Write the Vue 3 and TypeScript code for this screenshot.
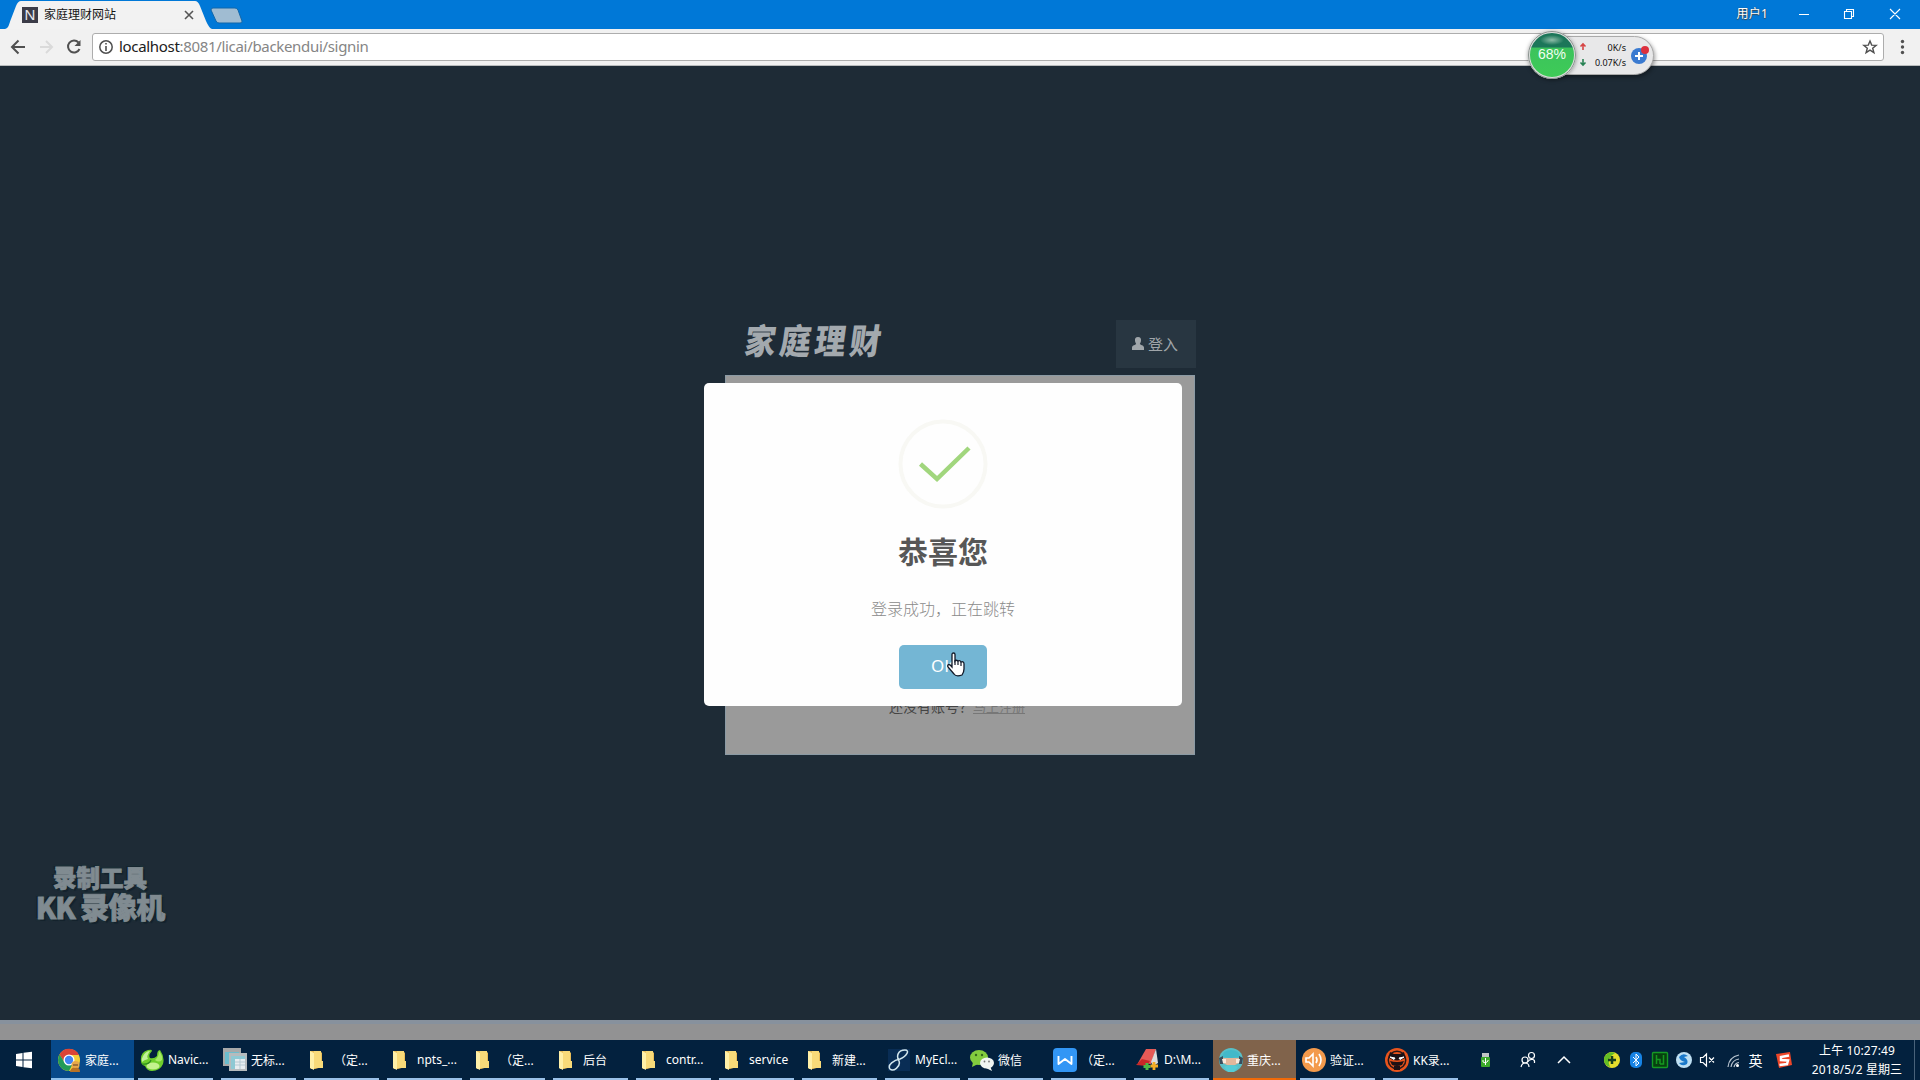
<script setup lang="ts">
interface Task { icon: string; label: string; state?: string }
const tasks: Task[] = [
  { icon: 'chrome', label: '家庭...', state: 'active' },
  { icon: 'navicat', label: 'Navic...' },
  { icon: 'notepad', label: '无标...' },
  { icon: 'folder', label: '（定...' },
  { icon: 'folder', label: 'npts_...' },
  { icon: 'folder', label: '（定...' },
  { icon: 'folder', label: '后台' },
  { icon: 'folder', label: 'contr...' },
  { icon: 'folder', label: 'service' },
  { icon: 'folder', label: '新建...' },
  { icon: 'eclipse', label: 'MyEcl...' },
  { icon: 'wechat', label: '微信' },
  { icon: 'wps', label: '（定...' },
  { icon: 'editor', label: 'D:\\M...' },
  { icon: 'avatar', label: '重庆...', state: 'alert' },
  { icon: 'sound', label: '验证...' },
  { icon: 'kk', label: 'KK录...' },
]
</script>

<template>
  <div class="screen">
    <header class="titlebar">
      <div class="tab">
        <svg class="tab-shape" width="212" height="29" viewBox="0 0 212 29">
          <path d="M5 29C9 28 9 24 11 19L16 6Q18 1 21 1H195Q198 1 200 6L206 21Q209 28 212 29Z" fill="#f2f2f2" />
        </svg>
        <span class="favicon">N</span>
        <span class="tab-title">家庭理财网站</span>
        <svg class="tab-close" width="10" height="10" viewBox="0 0 10 10"><path d="M1 1L9 9M9 1L1 9" stroke="#555" stroke-width="1.6" /></svg>
      </div>
      <svg class="newtab" width="34" height="18" viewBox="0 0 34 18">
        <path d="M3 1H25Q27 1 28 3L32 14Q32.500 16 30 16H9Q7 16 6 14L1 3Q1 1 3 1Z" fill="#a0bcd2" stroke="#1167aa" />
      </svg>
      <span class="spacer"></span>
      <span class="user">用户1</span>
      <svg class="winctl" width="120" height="28" viewBox="0 0 120 28" fill="none" stroke="#fff" stroke-width="1.1">
        <path d="M10 13.500H20M55.500 10.500H62.500V17.500H55.500ZM57.500 10.500V8.500H64.500V15.500H62.500M101 8L111 18M111 8L101 18" />
      </svg>
    </header>

    <nav class="toolbar">
      <svg class="nav" width="92" height="36" viewBox="0 0 92 36" fill="none" stroke-width="2">
        <path d="M25 18H12M18.500 11.500L12 18L18.500 24.500" stroke="#505050" />
        <path d="M40 18H52M46 12L52 18L46 24" stroke="#dadada" />
        <path d="M78.500 13.500A6 6 0 1 0 79.500 20" stroke="#505050" />
        <path d="M80.500 11V17H74.500Z" fill="#505050" />
      </svg>
      <div class="address">
        <svg width="16" height="16" viewBox="0 0 16 16"><circle cx="8" cy="8" r="6.200" fill="none" stroke="#4f4f4f" stroke-width="1.500" /><path d="M8 7V12M8 4V5.600" stroke="#4f4f4f" stroke-width="1.600" /></svg>
        <span class="url"><b>localhost</b>:8081/licai/backendui/signin</span>
        <svg class="star" width="16" height="16" viewBox="0 0 16 16"><path d="M8 2L9.700 6.100L14.200 6.400L10.700 9.300L11.900 13.700L8 11.200L4.100 13.700L5.300 9.300L1.800 6.400L6.300 6.100Z" fill="none" stroke="#505050" stroke-width="1.400" /></svg>
      </div>
      <svg class="menu" width="36" height="36" viewBox="0 0 36 36" fill="#505050"><circle cx="18.500" cy="12.500" r="1.700" /><circle cx="18.500" cy="18" r="1.700" /><circle cx="18.500" cy="23.500" r="1.700" /></svg>
    </nav>

    <main class="page">
      <section class="login">
        <div class="login-head">
          <h1 class="brand">家庭理财</h1>
          <div class="login-tab">
            <svg width="12" height="13" viewBox="0 0 12 13"><path d="M6 0C8.400 0 9.300 1.600 9 3.800C8.800 5.500 8 6.400 7.800 7C8.200 8 11.800 8 12 10.500V13H0V10.500C.2 8 3.800 8 4.200 7C4 6.400 3.200 5.500 3 3.800C2.700 1.600 3.600 0 6 0Z" fill="#a0a6aa" /></svg>
            <span>登入</span>
          </div>
        </div>
        <div class="login-body">
          <p>还没有账号？<a>马上注册</a></p>
        </div>
      </section>

      <div class="modal">
        <svg class="success" width="90" height="90" viewBox="0 0 90 90" fill="none">
          <circle cx="45" cy="45" r="42.500" stroke="#f8f8f4" stroke-width="4" />
          <path d="M22.500 45L39 60L71 29" stroke="#a1d67d" stroke-width="4.500" />
        </svg>
        <h2>恭喜您</h2>
        <p>登录成功，正在跳转</p>
        <button>OK</button>
      </div>

      <div class="watermark">录制工具<br /><span class="wm2">KK 录像机</span></div>
      <div class="page-foot"></div>
    </main>

    <footer class="taskbar">
      <svg class="start" width="51" height="40" viewBox="0 0 51 40" fill="#fff"><path d="M16 14L22.500 13V19.500H16ZM23.500 12.800L32 11.700V19.500H23.500ZM16 20.500H22.500V27L16 26ZM23.500 20.500H32V28.300L23.500 27.200Z" /></svg>
      <div v-for="(t, i) in tasks" :key="i" class="task" :class="t.state">
        <svg class="ticon" width="24" height="24" viewBox="0 0 24 24">
          <template v-if="t.icon === 'folder'">
            <path d="M4 3H14L16 5V19L9 21H5L4 19Z" fill="#e9bd59" /><path d="M4 3L8 5V22L4 20Z" fill="#fff0a8" /><path d="M8 3H15V13H17V20H8Z" fill="#f8da79" />
          </template>
          <template v-else-if="t.icon === 'chrome'">
            <circle cx="12" cy="12" r="11" fill="#f5ce38" /><path d="M2.500 6.500A11 11 0 0 1 22 7H12L7.700 14.500Z" fill="#db4437" /><path d="M2.500 6.500A11 11 0 0 0 12 23L16.500 14.500H7.700Z" fill="#239b58" /><circle cx="12" cy="12" r="5.500" fill="#fff" /><circle cx="12" cy="12" r="4.200" fill="#4285f4" /><circle cx="18.500" cy="17" r="4" fill="#e8a84a" /><path d="M13 24Q14 19 18 20Q23 19 23 24Z" fill="#b87225" /><path d="M16 17H21" stroke="#5d3b22" />
          </template>
          <template v-else-if="t.icon === 'navicat'">
            <path d="M1 13Q0 4 8 2Q12 1 12 3Q8 7 10 10Q14 11 17 8Q17 2 20 2Q25 9 23 16Q20 23 12 23Q7 23 5 18Q1 17 1 13Z" fill="#6fce2c" />
            <path d="M3 8Q6 3 10 3Q6 8 8 11Q4 12 2 14Q1 11 3 8Z" fill="#c2f29a" />
            <path d="M19 3Q23 8 22 12Q19 15 15 12Q19 9 19 3Z" fill="#a6ea66" />
            <ellipse cx="13" cy="18" rx="6.500" ry="3.600" fill="#c4f28e" />
            <path d="M2 16Q9 17 11 12" fill="none" stroke="#2b8a1c" stroke-width="1.200" />
          </template>
          <template v-else-if="t.icon === 'notepad'">
            <rect y="0" width="18" height="18" fill="#a8a9a9" /><rect x="2" y="4" width="14" height="12" fill="#6bbdce" /><rect x="6" y="5" width="18" height="18" fill="#b6bbbd" /><rect x="8" y="8" width="14" height="13" fill="#8ec9d4" /><rect x="12" y="11" width="10" height="10" fill="#e7edf0" /><path d="M12 14H22M12 17H22M17 11V21" stroke="#b5c9d2" />
          </template>
          <template v-else-if="t.icon === 'eclipse'">
            <rect x="1" y="1" width="22" height="22" fill="#092d55" /><path d="M3 21C0 17 7 12 13 11C20 8 23 2 18 2C11 2 9 8 12 13C14 19 6 24 3 21Z" fill="none" stroke="#d2e6ed" stroke-width="1.500" />
          </template>
          <template v-else-if="t.icon === 'wechat'">
            <ellipse cx="9" cy="9.500" rx="9" ry="7.500" fill="#82cc3e" /><path d="M3 14L2 19L8 16Z" fill="#82cc3e" /><circle cx="6" cy="7" r="1.200" fill="#35691c" /><circle cx="12" cy="7" r="1.200" fill="#35691c" /><ellipse cx="17" cy="15" rx="7" ry="5.600" fill="#f1f5f2" /><path d="M20 18L22 23L16 20Z" fill="#f1f5f2" /><circle cx="14.500" cy="13.500" r=".9" fill="#777" /><circle cx="19" cy="13.500" r=".9" fill="#777" />
          </template>
          <template v-else-if="t.icon === 'wps'">
            <rect width="24" height="24" rx="4" fill="#3296f5" /><path d="M5.500 8V16L12 11L18.500 16V8" fill="none" stroke="#fff" stroke-width="1.900" stroke-linejoin="round" />
          </template>
          <template v-else-if="t.icon === 'editor'">
            <path d="M10 1H20L15 16L2 15Z" fill="#e55a57" /><path d="M20 1L22 15L17 18L15 14Z" fill="#ddd" /><path d="M0 17L6 11L14 13L11 18Z" fill="#c72928" /><path d="M11 15V22M7.500 18.500H14.500" stroke="#4cb847" stroke-width="3" /><path d="M18 14V22M14.500 18H22" stroke="#f4ad25" stroke-width="2.800" />
          </template>
          <template v-else-if="t.icon === 'avatar'">
            <circle cx="12" cy="12" r="12" fill="#58bfc7" /><path d="M4 10H20V15Q12 20 4 15Z" fill="#e2b79b" /><path d="M3 9Q4 2 12 2Q20 2 21 9L12 10Z" fill="#43b9c9" /><path d="M0 10L4 8V16H1ZM24 10L20 8V16H23Z" fill="#394e5c" /><path d="M3 11H7V15H4ZM17 11H21L20 15H17Z" fill="#f8e9dc" /><path d="M5 19Q12 15 19 19L15 24H9Z" fill="#54cbd5" />
          </template>
          <template v-else-if="t.icon === 'sound'">
            <circle cx="12" cy="12" r="12" fill="#f39a4c" /><path d="M4 10H7L11 6V18L7 14H4Z" fill="none" stroke="#fff" stroke-width="1.600" /><path d="M14 9Q16 12 14 15M17 6Q21 12 17 18" fill="none" stroke="#fff" stroke-width="1.600" />
          </template>
          <template v-else>
            <circle cx="12" cy="12" r="12" fill="#e8541d" /><circle cx="12" cy="12" r="9.500" fill="#231719" /><circle cx="12" cy="12" r="8" fill="#e8541d" /><path d="M5 4L9 6H15L19 4L20 10Q12 15 4 10ZM5 13Q12 15 19 13L17 17Q12 19 7 17ZM9 18H15V22H9Z" fill="#1b1115" /><path d="M5 9L10 10L9 11.500ZM19 9L14 10L15 11.500Z" fill="#fff" stroke="#fff" />
          </template>
        </svg>
        <span>{{ t.label }}</span>
      </div>
      <span class="spacer"></span>
      <svg class="tray" width="330" height="40" viewBox="1470 0 330 40">
        <rect x="1482" y="13" width="7" height="4" fill="#bfc5c4" /><rect x="1481" y="17" width="9" height="10" rx="1" fill="#3baa2a" /><path d="M1485.500 18V25M1483 20V22L1485.500 23L1488 21V20" stroke="#fff" fill="none" />
        <g fill="none" stroke="#fff" stroke-width="1.200"><circle cx="1531.500" cy="15.500" r="3" /><path d="M1527.500 22Q1530 18.500 1533 19.500Q1535 20 1534.500 23" /><circle cx="1525" cy="20" r="3" /><path d="M1521 27Q1522 23 1525 23Q1529 23 1529 27" /><path d="M1558 23L1564 17L1570 23" stroke-width="1.500" /></g>
        <circle cx="1612" cy="20" r="8" fill="#e6df2d" /><path d="M1604 19A8 8 0 0 1 1615 13Q1606 18 1610 27A8 8 0 0 1 1604 19" fill="#63be24" /><path d="M1612 16V24M1608 20H1616" stroke="#18411b" stroke-width="2.500" />
        <rect x="1630" y="12" width="12" height="16" rx="5" fill="#1683e5" /><path d="M1633 17L1639 23L1636 26V14L1639 17L1633 23" fill="none" stroke="#fff" />
        <rect x="1652.500" y="12.500" width="15" height="15" rx="1" fill="#07400f" stroke="#159a25" stroke-width="1.400" /><path d="M1656.500 15V24M1656.500 19.500H1660V24M1663.500 15V24H1660" fill="none" stroke="#149920" stroke-width="1.500" />
        <circle cx="1684" cy="20" r="8" fill="#bedff3" /><path d="M1679 17Q1683 12 1688 16L1684 17Q1689 20 1687 24Q1682 27 1679 23L1685 22Q1680 21 1679 17" fill="#1978ca" />
        <g fill="none" stroke="#fff" stroke-width="1.200"><path d="M1700.500 17.500H1703L1706.500 14V26L1703 22.500H1700.500ZM1709 17.500L1714 22.500M1714 17.500L1709 22.500" /><path d="M1728 27Q1729 17 1739 15M1731 27Q1732 20 1739 19M1734 27Q1735 23 1739 22.500" stroke="#b9c5d0" /></g><circle cx="1737.500" cy="25.500" r="1.500" fill="#fff" />
        <text x="1748.500" y="26" fill="#fff" font-size="14">英</text>
        <path d="M1776 14L1790 12L1792 25L1779 28Z" fill="#ee4628" /><path d="M1789 15.500L1781 17L1781 20L1788 20.500L1787 24L1779.500 25" fill="none" stroke="#fff" stroke-width="2.500" />
      </svg>
      <div class="clock"><span>上午 10:27:49</span><span>2018/5/2 星期三</span></div>
    </footer>

    <div class="netball">
      <div class="rates">
        <svg width="8" height="26" viewBox="0 0 8 26" fill="none" stroke-width="1.600"><path d="M4 8V2M1.500 4.500L4 2L6.500 4.500" stroke="#d64545" /><path d="M4 17V23M1.500 20.500L4 23L6.500 20.500" stroke="#278153" /></svg>
        <div class="nums"><span>0K/s</span><span>0.07K/s</span></div>
        <svg width="20" height="20" viewBox="0 0 20 20"><circle cx="9" cy="11" r="8" fill="#3a7ad0" /><path d="M9 7V15M5 11H13" stroke="#fff" stroke-width="2" /><circle cx="15" cy="5" r="4" fill="#dc2f3d" /></svg>
      </div>
      <div class="ball">68%</div>
    </div>

    <svg class="cursor" width="22" height="26" viewBox="0 0 22 26"><path d="M6 2.500Q6 1 7.500 1Q9 1 9 2.500V9Q10 7.500 12 9Q14 8 15 10Q18 9 18 12V17Q18 20 16 23Q10 25 8 22L2 15Q1 13 3 12.500Q4 12.500 6 15Z" fill="#fff" stroke="#111827" stroke-width="1.300" /><path d="M9 8V13M12 9V13M15 10V14" stroke="#111827" stroke-width="1.200" /></svg>
  </div>
</template>

<style>
body { margin: 0; overflow: hidden; }
</style>
<style scoped>
* { box-sizing: border-box; }
h1, h2, p { margin: 0; }
.screen { width: 1920px; height: 1080px; position: relative; display: flex; flex-direction: column; overflow: hidden; font-family: "Noto Sans", "Noto Sans CJK SC", sans-serif; background: #1d2a35; }
.spacer { flex: 1; }
.titlebar { height: 29px; flex: none; background: #0078d7; display: flex; align-items: center; }
.tab { width: 212px; height: 29px; position: relative; isolation: isolate; display: flex; align-items: center; padding-left: 22px; }
.tab-shape { position: absolute; left: 0; top: 0; z-index: -1; }
.favicon { width: 16px; height: 16px; background: #3b3c48; color: #e9e9ed; font: 15px/16px "Liberation Sans", sans-serif; text-align: center; }
.tab-title { margin-left: 6px; font-size: 12px; line-height: 16px; color: #151515; width: 134px; }
.tab-close { margin-left: 6px; }
.newtab { margin: 3px 0 0 -2px; }
.user { color: #fff; font-size: 12px; line-height: 16px; margin-top: -1px; text-shadow: 0 1px 1px #444, 0 0 1px #444; margin-right: 21px; letter-spacing: .2px; }
.winctl { margin-right: 11px; }
.toolbar { height: 37px; flex: none; display: flex; background: #f1f1f1; border-bottom: 1px solid #b9bcbd; }
.address { flex: 1; height: 28px; margin-top: 4px; border: 1px solid #adadad; border-radius: 3px; background: #fff; display: flex; align-items: center; padding: 0 5px; font-size: 15px; color: #858585; }
.url { margin: -2px 0 0 5px; flex: 1; letter-spacing: -.32px; }
.url b { font-weight: 400; color: #202020; }
.page { height: 974px; flex: none; position: relative; background: #1e2b36; display: flex; flex-direction: column; align-items: center; }
.login { width: 470px; margin-top: 254px; }
.login-head { height: 55px; display: flex; justify-content: space-between; align-items: flex-start; }
.brand { margin: -6px 0 0 17px; font: italic 800 31px/50px "Noto Sans CJK SC", sans-serif; letter-spacing: 4px; color: #a3a9ae; transform: skewX(5deg) scaleY(1.12); }
.login-tab { width: 80px; height: 48px; margin-right: -1px; background: #283641; display: flex; align-items: center; justify-content: center; gap: 4px; color: #a0a6aa; font-size: 15px; padding: 0 2px 2px 0; }
.login-body { height: 380px; background: #9a9a9a; border: 1px solid #8b9aa4; padding: 320px 0 0 163px; font-size: 14px; line-height: 22px; color: #444; }
.login-body a { color: #777; font-size: 13px; text-decoration: underline; }
.modal { position: absolute; left: 704px; top: 317px; width: 478px; height: 323px; background: #fefefe; border-radius: 5px; display: flex; flex-direction: column; align-items: center; padding-top: 36px; }
.modal h2 { margin-top: 23px; font-size: 30px; line-height: 40px; font-weight: 700; color: #575757; }
.modal p { margin-top: 24px; font-size: 16px; line-height: 24px; font-weight: 300; color: #8a8a8a; font-family: "Noto Sans CJK SC", sans-serif; }
.modal button { margin-top: 25px; width: 88px; height: 44px; border: 0; border-radius: 5px; background: #74b6d4; color: #fff; font: 17px/42px "Noto Sans", sans-serif; padding: 0 0 2px; }
.watermark { position: absolute; left: 34px; top: 796px; width: 132px; text-align: center; font-size: 23.500px; line-height: 30px; color: #808b91; font-family: "Noto Sans CJK SC", sans-serif; font-weight: 900; -webkit-text-stroke: .8px #808b91; text-shadow: 2px 2px 0 #14222c, -2px -1px 0 #14222c, 0 0 3px #12453f; white-space: nowrap; }
.wm2 { font-size: 29px; line-height: 28px; letter-spacing: -1px; }
.page-foot { width: 100%; height: 20px; margin-top: auto; background: #929293; border-top: 4px solid #87919d; }
.taskbar { height: 40px; flex: none; display: flex; background: #03213e; color: #fff; }
.start { flex: none; }
.task { width: 83px; height: 40px; flex: none; display: flex; align-items: center; padding: 0 0 0 6px; gap: 4px; font-size: 12px; white-space: nowrap; background: linear-gradient(#9ac1e8, #9ac1e8) 4px 38px / 75px 2px no-repeat; }
.task span { margin-top: -1px; }
.task.active { background: linear-gradient(#8dc0ec, #8dc0ec) 0 38px / 83px 2px no-repeat, #07498a; }
.task.alert { background: linear-gradient(#f26a08, #f26a08) 0 38px / 83px 2px no-repeat, #80634b; }
.ticon { flex: none; }
.tray { flex: none; font-family: "Noto Sans CJK SC", sans-serif; }
.clock { width: 115px; margin-right: 5px; padding-top: 1px; border-right: 1px solid #49627a; display: flex; flex-direction: column; align-items: center; font-size: 12px; line-height: 19px; letter-spacing: .1px; white-space: nowrap; }
.netball { position: absolute; left: 1528px; top: 31px; width: 126px; height: 48px; display: flex; align-items: center; }
.rates { width: 106px; height: 39px; margin: 0 0 0 20px; border-radius: 0 20px 20px 0; border: 1px solid #aaa; background: #e8e8e9; display: flex; align-items: center; padding-left: 30px; box-shadow: 1px 2px 4px #0006; }
.nums { display: flex; flex-direction: column; width: 39px; text-align: right; font-size: 9px; line-height: 15px; color: #111; margin-right: 4px; }
.ball { position: absolute; left: 0; top: 0; width: 48px; height: 48px; border-radius: 50%; border: 2px solid #dcdfdd; outline: 1px solid #8b9390; outline-offset: -1px; background: radial-gradient(ellipse 12px 5px at 50% 16%, #8ebda8, transparent), linear-gradient(#1c7659 0 32%, #3cc35c 34%, #3ecb57); color: #f1fff2; font: 14px/42px "Liberation Sans", sans-serif; text-align: center; box-shadow: 0 1px 4px #0006; }
.cursor { position: absolute; left: 946px; top: 652px; }
</style>
